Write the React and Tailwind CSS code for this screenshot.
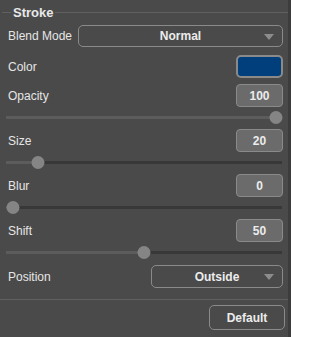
import React from "react";

function Slider({ value, className = "" }) {
  return (
    <div className={`relative mx-[6px] h-[13px] ${className}`}>
      <div className="absolute left-0 right-0 top-[5px] h-[3px] bg-[#383838]" />
      <div className="absolute left-0 top-[5px] h-[3px] bg-[#5c5c5c]" style={{ width: `${value}%` }} />
      <div
        className="absolute top-0 h-[13px] w-[13px] -translate-x-1/2 rounded-full bg-[#858585]"
        style={{ left: `${value}%` }}
      />
    </div>
  );
}

function NumBox({ children }) {
  return (
    <div className="flex h-[23px] w-[47px] items-center justify-center rounded-[4px] border border-[#8a8a8a] bg-[#6b6b6b] text-[12px] font-bold text-[#ececec]">
      {children}
    </div>
  );
}

function Caret() {
  return (
    <svg width="10" height="7" viewBox="0 0 10 7" className="absolute right-[8px] top-[8px]">
      <polygon points="0,0 10,0 5,6" fill="#8c8c8c" />
    </svg>
  );
}

function Row({ label, children, className = "" }) {
  return (
    <div className={`flex items-center justify-between pl-[8px] pr-[5px] ${className}`}>
      <span className="text-[12px] text-[#e6e6e6]">{label}</span>
      {children}
    </div>
  );
}

export default function App() {
  return (
    <div
      className="flex h-[337px] w-[291px] bg-[#3c3c3c]"
      style={{ fontFamily: '"Liberation Sans", Arial, sans-serif' }}
    >
      <div className="flex h-full w-[288px] flex-col bg-[#4a4a4a]">
        {/* group title */}
        <div className="flex h-[25px] items-center">
          <div className="ml-[2px] h-px w-[9px] bg-[#606060]" />
          <span className="px-[2px] text-[13px] font-bold text-[#e8e8e8]">Stroke</span>
          <div className="h-px flex-1 bg-[#606060]" />
        </div>

        <Row label="Blend Mode" className="h-[22px]">
          <div className="relative flex h-[22px] w-[205px] items-center justify-center rounded-[5px] border border-[#8a8a8a] text-[12px] font-bold text-[#ececec]">
            Normal
            <Caret />
          </div>
        </Row>

        <Row label="Color" className="mt-[8px] h-[23px]">
          <div className="h-[23px] w-[47px] rounded-[5px] border-2 border-[#8a8a8a] bg-[#003f7c]" />
        </Row>

        <Row label="Opacity" className="mt-[6px] h-[23px]">
          <NumBox>100</NumBox>
        </Row>
        <Slider value={98} className="mt-[4px]" />

        <Row label="Size" className="mt-[5px] h-[23px]">
          <NumBox>20</NumBox>
        </Row>
        <Slider value={11.5} className="mt-[4px]" />

        <Row label="Blur" className="mt-[5px] h-[23px]">
          <NumBox>0</NumBox>
        </Row>
        <Slider value={2.5} className="mt-[4px]" />

        <Row label="Shift" className="mt-[5px] h-[23px]">
          <NumBox>50</NumBox>
        </Row>
        <Slider value={50} className="mt-[4px]" />

        <Row label="Position" className="mt-[6px] h-[23px]">
          <div className="relative flex h-[23px] w-[132px] items-center justify-center rounded-[5px] border border-[#8a8a8a] text-[12px] font-bold text-[#ececec]">
            Outside
            <Caret />
          </div>
        </Row>

        <div className="mt-[11px] h-px bg-[#606060]" />

        <div className="mt-[5px] flex justify-end pr-[3px]">
          <div className="flex h-[25px] w-[76px] items-center justify-center rounded-[5px] border border-[#8a8a8a] text-[12px] font-bold text-[#ececec]">
            Default
          </div>
        </div>
      </div>
    </div>
  );
}
